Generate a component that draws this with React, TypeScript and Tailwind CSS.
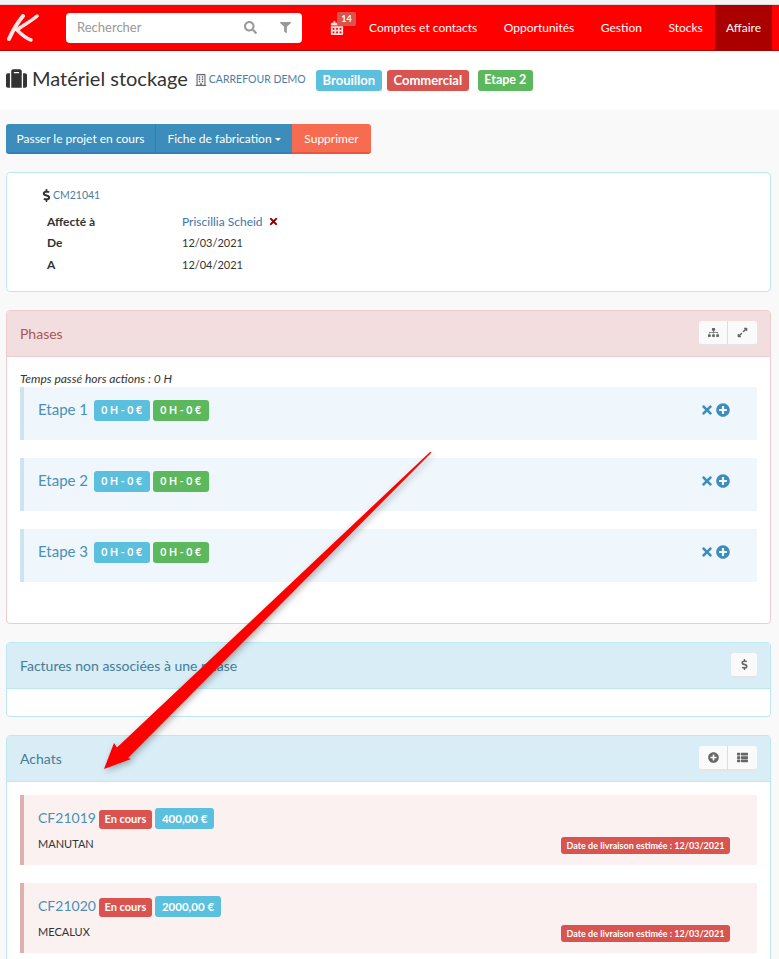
import {
  FaSuitcase,
  FaRegBuilding,
  FaCalendarAlt,
  FaDollarSign,
  FaExpandAlt,
  FaFilter,
  FaThList,
  FaPlusCircle,
  FaSearch,
  FaSitemap,
  FaTimes,
} from "react-icons/fa";
import type { ReactNode } from "react";

const NAV = ["Comptes et contacts", "Opportunités", "Gestion", "Stocks"];
const STEPS = ["Etape 1", "Etape 2", "Etape 3"];
const ORDERS = [
  { ref: "CF21019", amount: "400,00 €", supplier: "MANUTAN" },
  { ref: "CF21020", amount: "2000,00 €", supplier: "MECALUX" },
];

function Label({ color, className, children }: { color: string; className?: string; children: ReactNode }) {
  return (
    <span className={`inline-flex items-center justify-center whitespace-nowrap rounded-[3px] font-bold text-white ${color} ${className ?? ""}`}>
      {children}
    </span>
  );
}

function PanelButton({ children, group, first }: { children: ReactNode; group?: boolean; first?: boolean }) {
  return (
    <span
      className={`flex h-[25px] items-center justify-center bg-[#fafafa] text-[11px] text-[#666] border-b-2 border-b-[#e5e5e5] ${
        group ? (first ? "w-[29px] rounded-l-[3px] border-r border-r-[#ddd]" : "w-[29px] rounded-r-[3px]") : "w-[26px] rounded-[3px]"
      }`}
    >
      {children}
    </span>
  );
}

function Panel({
  title,
  tone,
  actions,
  children,
}: {
  title: string;
  tone: "red" | "blue";
  actions: ReactNode;
  children: ReactNode;
}) {
  const red = tone === "red";
  return (
    <section className={`rounded-[4px] border bg-white ${red ? "border-[#ebccd1]" : "border-[#bce8f1]"}`}>
      <header
        className={`flex h-[46px] items-center justify-between border-b px-[13px] text-[14px] ${
          red ? "border-[#ebccd1] bg-[#f2dede] text-[#a9565a]" : "border-[#bce8f1] bg-[#d9edf7] text-[#457c98]"
        }`}
      >
        <span>{title}</span>
        <div className="flex">{actions}</div>
      </header>
      {children}
    </section>
  );
}

function Arrow() {
  return (
    <svg className="pointer-events-none absolute left-0 top-0 drop-shadow-[2px_2px_3px_rgba(0,0,0,0.3)]" width="779" height="959">
      <polygon points="431.5,452.5 128,758 131,759 104,769 114,743 117,747.5 430,452" fill="#ff0000" />
    </svg>
  );
}

export default function App() {
  return (
    <div className="relative h-[959px] overflow-hidden bg-[#f9f9f9] font-['Lato',sans-serif] text-[13px] text-[#333]">
      <div className="h-[5px] border-b border-[#d8d8d8] bg-[#f4f4f4]" />

      {/* Navbar */}
      <nav className="flex h-[46px] items-stretch border-b border-[#b00000] bg-[#ff0000] text-[12px] text-white">
        <div className="flex w-[66px] items-center pl-[7px]">
          <svg width="32" height="28" viewBox="0 0 32 28" fill="none" stroke="#fff" strokeLinecap="round">
            <path d="M16 2C11 8 6 16 2 25" strokeWidth="4" opacity="0.9" />
            <path d="M30 2C23 8 15 12 10 16C14 20 18 24 24 26" strokeWidth="3.5" opacity="0.9" />
          </svg>
        </div>
        <div className="my-auto flex h-[30px] w-[236px] items-center rounded-[4px] bg-white px-[11px]">
          <span className="flex-1 text-[13px] text-[#999]">Rechercher</span>
          <FaSearch className="mr-[23px] text-[13px] text-[#999]" />
          <FaFilter className="text-[11px] text-[#999]" />
        </div>
        <div className="relative ml-[28px] flex w-[39px] items-center">
          <FaCalendarAlt className="text-[14px] text-[#fdd]" />
          <span className="absolute left-[7px] top-[7px] flex h-[14px] w-[19px] items-center justify-center rounded-[2px] bg-[#d9534f] text-[9px] font-bold">14</span>
        </div>
        <div className="flex flex-1 items-center gap-[26.5px] whitespace-nowrap">
          {NAV.map((item) => (
            <a key={item}>{item}</a>
          ))}
        </div>
        <a className="mr-[7px] flex w-[57px] items-center justify-center bg-[#aa0000]">Affaire</a>
      </nav>

      {/* Title bar */}
      <div className="flex h-[59px] items-center bg-white pb-[5px] pl-[6px]">
        <FaSuitcase className="text-[21px] text-[#333]" />
        <h1 className="ml-[5px] text-[20px] leading-none text-[#333]">Matériel stockage</h1>
        <FaRegBuilding className="ml-[7px] mt-[4px] text-[12px] text-[#667]" />
        <span className="ml-[2px] mt-[4px] w-[99px] whitespace-nowrap text-[10.5px] text-[#4a7da3]">CARREFOUR DEMO</span>
        <Label color="bg-[#5bc0de]" className="ml-[8px] mt-[5px] h-[21px] w-[66px] text-[13px]">Brouillon</Label>
        <Label color="bg-[#d9534f]" className="ml-[5px] mt-[5px] h-[21px] w-[82px] text-[13px]">Commercial</Label>
        <Label color="bg-[#5cb85c]" className="ml-[9px] mt-[5px] h-[21px] w-[55px] text-[12.5px]">Etape 2</Label>
      </div>

      <main className="flex flex-col pl-[6px] pr-[8px] pt-[14px]">
        {/* Actions */}
        <div className="flex h-[30px] text-[12px] text-white">
          <span className="flex w-[150px] items-center justify-center rounded-l-[3px] border-r border-b-2 border-b-[#357ebd] border-r-[#357ebd] bg-[#3c8dbc] pt-[2px]">Passer le projet en cours</span>
          <span className="flex w-[136px] items-center justify-center gap-[3px] border-b-2 border-b-[#357ebd] bg-[#3c8dbc] pt-[2px]">
            Fiche de fabrication
            <span className="mt-[1px] h-0 w-0 border-x-[3px] border-t-[3px] border-x-transparent border-t-white" />
          </span>
          <span className="flex w-[79px] items-center justify-center rounded-r-[3px] border-b-2 border-b-[#e9573f] bg-[#f76c51] pt-[2px]">Supprimer</span>
        </div>

        {/* Project info */}
        <section className="mt-[18px] h-[120px] rounded-[4px] border border-[#bce8f1] bg-white pl-[33px] pt-[15px]">
          <div className="flex items-center text-[10.5px] text-[#4a7da3]">
            <FaDollarSign className="text-[13px] text-[#333]" />
            <span>CM21041</span>
          </div>
          <dl className="mt-[7px] grid grid-cols-[135px_1fr] pl-[7px] text-[12px] leading-[21.5px]">
            <dt className="font-bold">Affecté à</dt>
            <dd className="flex items-center text-[#3c76a8]">
              Priscillia Scheid
              <FaTimes className="ml-[5px] text-[11px] text-[#990000]" />
            </dd>
            <dt className="font-bold">De</dt>
            <dd className="text-[11px]">12/03/2021</dd>
            <dt className="font-bold">A</dt>
            <dd className="text-[11px]">12/04/2021</dd>
          </dl>
        </section>

        {/* Phases */}
        <div className="mt-[18px]">
          <Panel
            title="Phases"
            tone="red"
            actions={
              <>
                <PanelButton group first><FaSitemap /></PanelButton>
                <PanelButton group><FaExpandAlt /></PanelButton>
              </>
            }
          >
            <div className="h-[266px] px-[13px] pt-[14px]">
              <p className="text-[12px] italic leading-[16px] text-[#333]">Temps passé hors actions : 0 H</p>
              <div className="flex flex-col gap-[18px]">
                {STEPS.map((step) => (
                  <div key={step} className="flex h-[53px] items-start border-l-4 border-[#cfe2f0] bg-[#eff6fc] pl-[14px] pr-[27px] pt-[12px]">
                    <span className="text-[15px] leading-[20px] text-[#4a90b8]">{step}</span>
                    <Label color="bg-[#5bc0de]" className="ml-[6px] mt-[1px] h-[21px] w-[56px] text-[10.5px] tracking-[0.8px] [word-spacing:-1.5px]">0 H - 0 €</Label>
                    <Label color="bg-[#5cb85c]" className="ml-[3px] mt-[1px] h-[21px] w-[56px] text-[10.5px] tracking-[0.8px] [word-spacing:-1.5px]">0 H - 0 €</Label>
                    <span className="ml-auto mt-[4px] flex items-center gap-[2px] text-[#3c8dbc]">
                      <FaTimes className="text-[14px]" />
                      <FaPlusCircle className="text-[14px]" />
                    </span>
                  </div>
                ))}
              </div>
            </div>
          </Panel>
        </div>

        {/* Factures */}
        <div className="mt-[18px]">
          <Panel title="Factures non associées à une phase" tone="blue" actions={<PanelButton><FaDollarSign /></PanelButton>}>
            <div className="h-[27px]" />
          </Panel>
        </div>

        {/* Achats */}
        <div className="mt-[18px]">
          <Panel
            title="Achats"
            tone="blue"
            actions={
              <>
                <PanelButton group first><FaPlusCircle /></PanelButton>
                <PanelButton group><FaThList /></PanelButton>
              </>
            }
          >
            <div className="flex flex-col gap-[18px] p-[13px]">
              {ORDERS.map((order) => (
                <div key={order.ref} className="relative h-[70px] border-l-4 border-[#deb0b0] bg-[#fbf1f0] pl-[14px] pt-[13px]">
                  <div className="flex items-start">
                    <span className="text-[14px] leading-[20px] text-[#4a90b8]">{order.ref}</span>
                    <Label color="bg-[#d9534f]" className="ml-[3px] mt-[2px] h-[19px] w-[53px] text-[11px]">En cours</Label>
                    <Label color="bg-[#5bc0de]" className="ml-[3px] h-[21px] px-[7px] text-[11.5px]">{order.amount}</Label>
                  </div>
                  <p className="mt-[7px] text-[11px] leading-[16px] text-[#333]">{order.supplier}</p>
                  <Label color="bg-[#d9534f]" className="absolute bottom-[11px] right-[27px] h-[17px] w-[169px] text-[9px]">
                    Date de livraison estimée : 12/03/2021
                  </Label>
                </div>
              ))}
            </div>
          </Panel>
        </div>
      </main>

      <Arrow />
    </div>
  );
}
